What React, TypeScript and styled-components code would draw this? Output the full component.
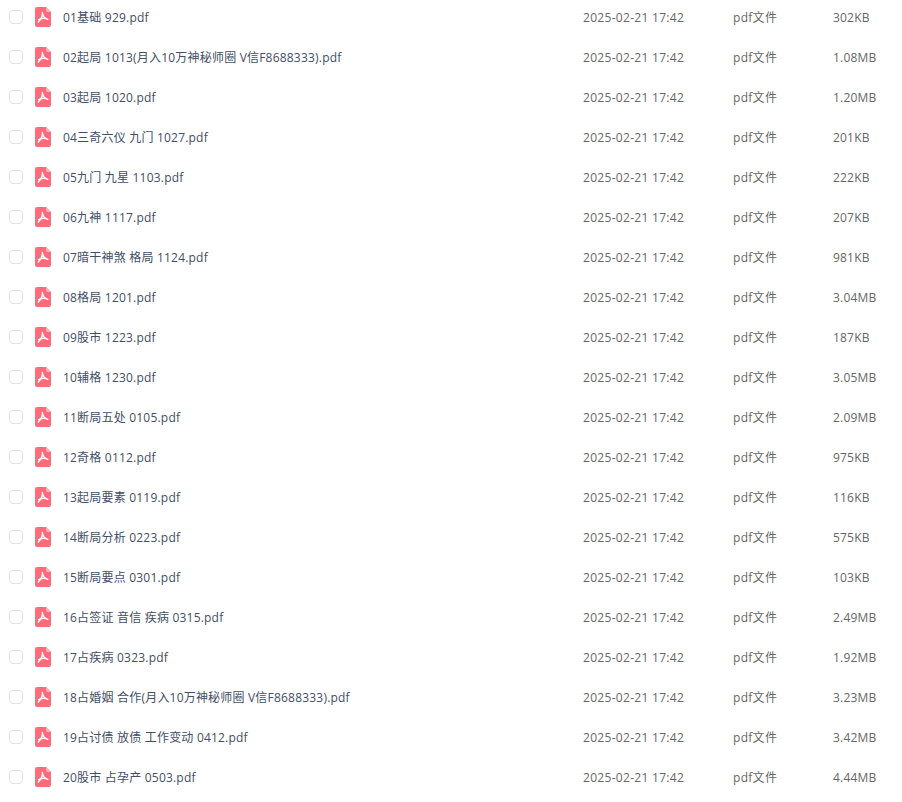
import React from "react";
import styled, { createGlobalStyle } from "styled-components";

const Global = createGlobalStyle`
  html, body { margin: 0; padding: 0; background: #fff; overflow: hidden; }
  body { font-family: "Open Sans", "Noto Sans CJK SC", sans-serif; }
`;

const List = styled.div`
  display: flex;
  flex-direction: column;
  margin-top: -3px;
`;

const Row = styled.div`
  display: flex;
  align-items: center;
  height: 40px;
`;

const Check = styled.span`
  width: 12px;
  height: 12px;
  margin-left: 9px;
  border: 1px solid #e2e2e2;
  border-radius: 4px;
  flex: none;
`;

const FileIcon = styled.svg`
  width: 16px;
  height: 20px;
  margin-left: 12px;
  flex: none;
`;

const Name = styled.span`
  width: 520px;
  margin-left: 12px;
  flex: none;
  font-size: 12px;
  letter-spacing: 0.2px;
  color: #424e67;
  white-space: nowrap;
`;

const Meta = styled.span<{ $w: number; $track: number }>`
  width: ${(p) => p.$w}px;
  flex: none;
  font-size: 12px;
  letter-spacing: ${(p) => p.$track}px;
  color: #666;
  white-space: nowrap;
`;

const rows: [string, string][] = [
  ["01基础 929.pdf", "302KB"],
  ["02起局 1013(月入10万神秘师圈 V信F8688333).pdf", "1.08MB"],
  ["03起局 1020.pdf", "1.20MB"],
  ["04三奇六仪 九门 1027.pdf", "201KB"],
  ["05九门 九星 1103.pdf", "222KB"],
  ["06九神 1117.pdf", "207KB"],
  ["07暗干神煞 格局 1124.pdf", "981KB"],
  ["08格局 1201.pdf", "3.04MB"],
  ["09股市 1223.pdf", "187KB"],
  ["10辅格 1230.pdf", "3.05MB"],
  ["11断局五处 0105.pdf", "2.09MB"],
  ["12奇格 0112.pdf", "975KB"],
  ["13起局要素 0119.pdf", "116KB"],
  ["14断局分析 0223.pdf", "575KB"],
  ["15断局要点 0301.pdf", "103KB"],
  ["16占签证 音信 疾病 0315.pdf", "2.49MB"],
  ["17占疾病 0323.pdf", "1.92MB"],
  ["18占婚姻 合作(月入10万神秘师圈 V信F8688333).pdf", "3.23MB"],
  ["19占讨债 放债 工作变动 0412.pdf", "3.42MB"],
  ["20股市 占孕产 0503.pdf", "4.44MB"],
];

const Pdf = () => (
  <FileIcon viewBox="0 0 16 20">
    <path d="M2 0H11L16 5V18a2 2 0 0 1-2 2H2a2 2 0 0 1-2-2V2a2 2 0 0 1 2-2Z" fill="#ff6b7c" />
    <path d="M11 0L16 5H12a1 1 0 0 1-1-1Z" fill="#ffb3bc" />
    <path d="M7.4 5.5C7.7 8.5 9.2 11.4 12.8 12.4M7.4 5.5C7.8 8.5 6.2 12 3.4 15M3.6 12.6C6.3 11.2 9.8 10.8 12.8 12.4" stroke="#fff" strokeWidth="1.4" fill="none" strokeLinecap="round" />
  </FileIcon>
);

export default function App() {
  return (
    <>
      <Global />
      <List>
        {rows.map(([name, size]) => (
          <Row key={name}>
            <Check />
            <Pdf />
            <Name>{name}</Name>
            <Meta $w={150} $track={0.3}>2025-02-21 17:42</Meta>
            <Meta $w={100} $track={0.3}>pdf文件</Meta>
            <Meta $w={60} $track={0.2}>{size}</Meta>
          </Row>
        ))}
      </List>
    </>
  );
}
